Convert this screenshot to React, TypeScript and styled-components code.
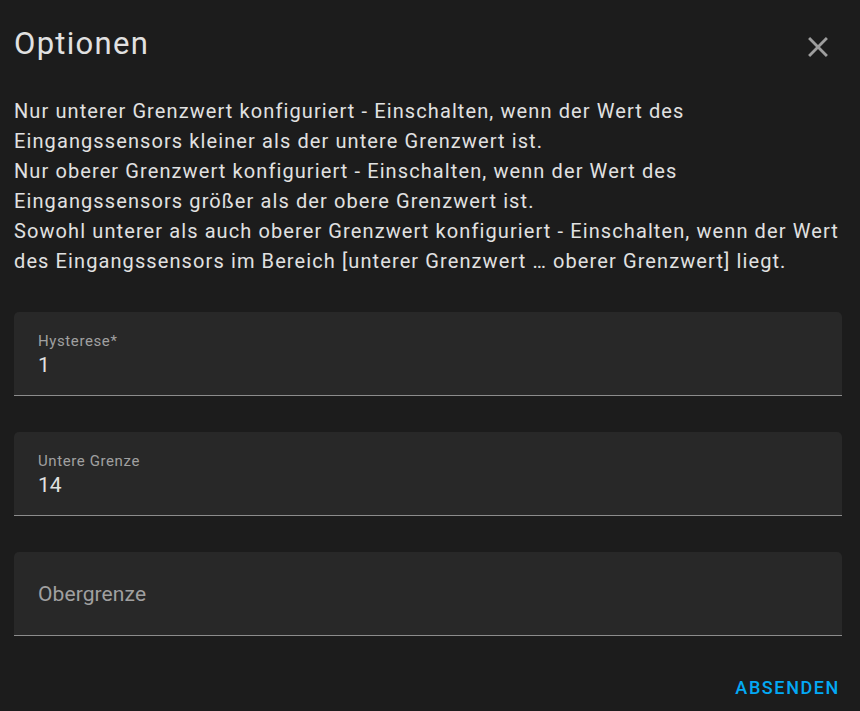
import { FC } from "react";
import styled, { createGlobalStyle } from "styled-components";

const GlobalStyle = createGlobalStyle`
  html, body {
    margin: 0;
    padding: 0;
    background-color: #1c1c1c;
  }

  body {
    font-family: Roboto, "Noto Sans", sans-serif;
    color: #e1e1e1;
  }
`;

const Dialog = styled.div`
  display: flex;
  flex-direction: column;
  padding: 24px 18px 0 14px;
  min-height: 711px;
  box-sizing: border-box;
`;

const Header = styled.div`
  display: flex;
  justify-content: space-between;
  align-items: flex-start;
  height: 40px;
`;

const Title = styled.h2`
  margin: 0;
  font-size: 31px;
  font-weight: 400;
  line-height: 40px;
  letter-spacing: 1.3px;
  color: #e1e1e1;
`;

const CloseButton = styled.button`
  display: flex;
  align-items: center;
  justify-content: center;
  margin: 6px 7px 0 0;
  padding: 0;
  border: none;
  background: none;
  color: #9e9e9e;
  cursor: pointer;
`;

const Description = styled.p`
  margin: 32px 0 0;
  font-size: 20px;
  line-height: 30px;
  letter-spacing: 1.1px;
  color: #e1e1e1;
`;

const Fields = styled.div`
  display: flex;
  flex-direction: column;
  gap: 36px;
  margin-top: 36px;
`;

const Field = styled.div<{ $empty?: boolean }>`
  display: flex;
  flex-direction: column;
  justify-content: ${({ $empty }) => ($empty ? "center" : "flex-start")};
  height: 84px;
  box-sizing: border-box;
  padding: ${({ $empty }) => ($empty ? "0 24px" : "20px 24px 0")};
  background-color: #282828;
  border-radius: 5px 5px 0 0;
  border-bottom: 1px solid #8c8c8c;
`;

const Label = styled.label<{ $floating: boolean }>`
  font-size: ${({ $floating }) => ($floating ? "15px" : "21px")};
  line-height: ${({ $floating }) => ($floating ? "18px" : "24px")};
  letter-spacing: ${({ $floating }) => ($floating ? "0.6px" : "0.1px")};
  color: #a0a0a0;
`;

const Value = styled.div`
  margin-top: 3px;
  font-size: 21px;
  line-height: 24px;
  color: #e1e1e1;
`;

const Actions = styled.div`
  display: flex;
  justify-content: flex-end;
  margin-top: 40px;
`;

const SubmitButton = styled.button`
  padding: 0 2px 0 0;
  border: none;
  background: none;
  font-family: Roboto, "Noto Sans", sans-serif;
  font-size: 18px;
  font-weight: 500;
  line-height: 24px;
  letter-spacing: 1.6px;
  text-transform: uppercase;
  color: #03a9f4;
  cursor: pointer;
`;

interface FieldProps {
  label: string;
  value?: string;
}

const TextField: FC<FieldProps> = ({ label, value }) => {
  const empty = value === undefined;
  return (
    <Field $empty={empty}>
      <Label $floating={!empty}>{label}</Label>
      {!empty && <Value>{value}</Value>}
    </Field>
  );
};

const CloseIcon = () => (
  <svg width="34" height="34" viewBox="0 0 24 24" fill="currentColor">
    <path d="M19,6.41L17.59,5L12,10.59L6.41,5L5,6.41L10.59,12L5,17.59L6.41,19L12,13.41L17.59,19L19,17.59L13.41,12L19,6.41Z" />
  </svg>
);

const App = () => {
  return (
    <>
      <GlobalStyle />
      <Dialog>
        <Header>
          <Title>Optionen</Title>
          <CloseButton aria-label="Schließen">
            <CloseIcon />
          </CloseButton>
        </Header>
        <Description>
          Nur unterer Grenzwert konfiguriert - Einschalten, wenn der Wert des
          Eingangssensors kleiner als der untere Grenzwert ist.
          <br />
          Nur oberer Grenzwert konfiguriert - Einschalten, wenn der Wert des
          Eingangssensors größer als der obere Grenzwert ist.
          <br />
          Sowohl unterer als auch oberer Grenzwert konfiguriert - Einschalten,
          wenn der Wert des Eingangssensors im Bereich [unterer Grenzwert …
          oberer Grenzwert] liegt.
        </Description>
        <Fields>
          <TextField label="Hysterese*" value="1" />
          <TextField label="Untere Grenze" value="14" />
          <TextField label="Obergrenze" />
        </Fields>
        <Actions>
          <SubmitButton>Absenden</SubmitButton>
        </Actions>
      </Dialog>
    </>
  );
};

export default App;
